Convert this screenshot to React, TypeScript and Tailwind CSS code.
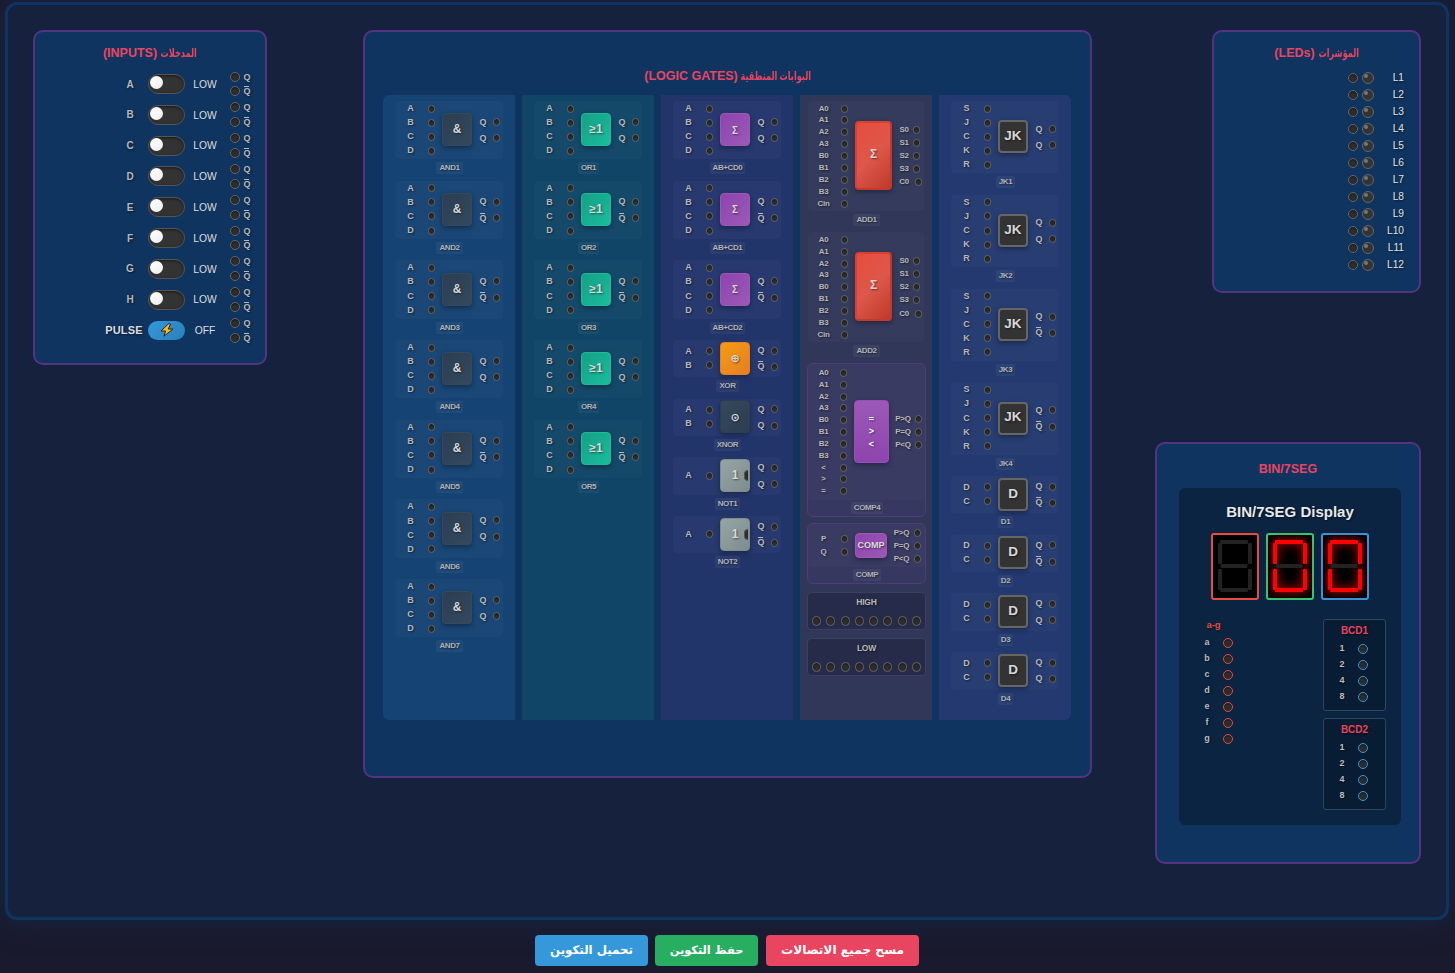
import React from "react";

const SH = "[text-shadow:1px_1px_2px_rgba(0,0,0,0.5)]";

function QBar() {
  return (
    <span className="relative inline-block">
      Q
      <span className="absolute top-[1px] left-[1px] h-px w-[5px] bg-[#b7b7b7]" />
    </span>
  );
}

const out = (t: string) => (t === "/Q" ? <QBar /> : t);

function Title({ ar, arWidth = "", en, className = "" }: { ar?: string; arWidth?: string; en: string; className?: string }) {
  return (
    <h3 dir="rtl" className={`flex justify-center gap-[4px] text-[12.5px] leading-[16px] font-bold whitespace-nowrap text-[#e94560] ${className}`}>
      {ar && (
        <span className={`flex justify-center text-[12px] ${arWidth}`}>
          <span className="block shrink-0 scale-x-[0.68]">{ar}</span>
        </span>
      )}
      <span>{en}</span>
    </h3>
  );
}

function Hole({ className }: { className: string }) {
  return <span className={`block shrink-0 rounded-full border bg-[#2d2d2d] shadow-[inset_0_1px_2px_rgba(0,0,0,0.5)] ${className}`} />;
}

type GateProps = {
  name: string;
  ins: string[];
  outs: string[];
  symbol: React.ReactNode;
  icon: string;
  bubble?: boolean;
};

function Tag({ children }: { children: React.ReactNode }) {
  return (
    <div className="flex justify-center pl-px">
      <div className={`h-[12px] rounded-[2px] bg-white/5 px-[3px] text-[8px] leading-[11px] font-bold tracking-[-0.4px] text-[#aeb1b6] ${SH}`}>
        {children}
      </div>
    </div>
  );
}

function Gate({ name, ins, outs, symbol, icon, bubble }: GateProps) {
  return (
    <div className="mb-[6.3px]">
      <div className="mx-[12px] flex min-h-[37.4px] items-center rounded-[4px] bg-white/[0.025] pt-[1px] pb-[2px]">
        <div className="-mt-px">
          {ins.map((t) => (
            <div key={t} className="flex h-[14.1px] items-center gap-[2px]">
              <span className={`w-[31px] text-center text-[9px] leading-[12px] font-bold text-[#b7b7b7] ${SH}`}>{t}</span>
              <Hole className="mt-px h-[8px] w-[7px] border-[#666]" />
            </div>
          ))}
        </div>
        <div className={`relative ml-[7px] flex h-[33px] w-[30px] items-center justify-center rounded-[4px] pb-[1px] font-bold text-[#d8d8d8] shadow-[0_2px_5px_rgba(0,0,0,0.35)] ${SH} ${icon}`}>
          {symbol}
          {bubble && <span className="absolute top-[10px] right-[1px] h-[11px] w-[4px] rounded-l-full border border-r-0 border-[#555] bg-[#2d2d2d]" />}
        </div>
        <div>
          {outs.map((t, i) => (
            <div key={i} className="flex h-[16.3px] items-center">
              <span className={`w-[22px] text-center text-[9px] leading-[12px] font-bold text-[#b7b7b7] ${SH}`}>{out(t)}</span>
              <Hole className="mt-px -ml-px h-[8px] w-[7px] border-[#666]" />
            </div>
          ))}
        </div>
      </div>
      <div className="pt-[3px]">
        <Tag>{name}</Tag>
      </div>
    </div>
  );
}

const SMALL = `text-center text-[8px] leading-[11px] font-bold tracking-[-0.3px] text-[#b7b7b7] ${SH}`;

function Pins({ items, label, row }: { items: string[]; label: string; row: string }) {
  return (
    <div>
      {items.map((t) => (
        <div key={t} className={`flex items-center ${row}`}>
          <span className={`${SMALL} ${label}`}>{t}</span>
          <Hole className="mt-px h-[8px] w-[7px] border-[#666]" />
        </div>
      ))}
    </div>
  );
}

const ABITS = ["A0", "A1", "A2", "A3", "B0", "B1", "B2", "B3"];

function Adder({ name }: { name: string }) {
  return (
    <div className="mb-[6.3px]">
      <div className="mx-[8px] flex h-[110px] items-center rounded-[4px] bg-white/[0.025]">
        <div className="-mt-px">
          <Pins items={[...ABITS, "Cin"]} label="mr-[2px] w-[31px]" row="h-[11.88px]" />
        </div>
        <div className={`ml-[7px] -mt-px flex h-[69px] w-[37px] items-center justify-center rounded-[4px] border-2 border-t-[#d8402f] border-r-[#c0392b] border-b-[#c53a2c] border-l-[#d8402f] bg-linear-135 from-[#e74c3c] via-[#dd574a] to-[#c0392b] pb-[3px] text-[12px] font-bold text-[#e6d0ce] shadow-[0_2px_5px_rgba(0,0,0,0.35)] ${SH}`}>
          Σ
        </div>
        <div className="-mt-px">
          <Pins items={["S0", "S1", "S2", "S3"]} label="w-[21px] pl-[3px]" row="h-[13.2px]" />
          <Pins items={["C0"]} label="w-[23px] pl-px" row="h-[13.2px]" />
        </div>
      </div>
      <div className="pt-[3px]">
        <Tag>{name}</Tag>
      </div>
    </div>
  );
}

function Rail({ name, className }: { name: string; className: string }) {
  return (
    <div className={`mr-[6px] ml-[7px] h-[38px] rounded-[4px] border border-[#3b4062] bg-[#272b4a] ${className}`}>
      <div className={`mt-[3px] text-center text-[8.5px] leading-[12px] font-bold tracking-[-0.2px] text-[#b7b7b7] ${SH}`}>{name}</div>
      <div className="mt-[8px] flex justify-between px-[4px]">
        {Array.from({ length: 8 }, (_, i) => (
          <Hole key={i} className="h-[10px] w-[9px] border-[#666]" />
        ))}
      </div>
    </div>
  );
}

function Digit({ border, on }: { border: string; on: boolean }) {
  const lit = on ? "fill-[#ff0000] drop-shadow-[0_0_5px_#ff0000]" : "fill-[#222]";
  return (
    <div className={`h-[67px] w-[48px] rounded-[3px] border-2 bg-black ${border}`}>
      <svg viewBox="0 0 44 63" className="block h-[63px] w-[44px] overflow-visible">
        <g className={lit}>
          <rect x="7" y="5" width="28" height="4" rx="1" />
          <rect x="5" y="8" width="4" height="21" rx="1" />
          <rect x="35" y="8" width="4" height="21" rx="1" />
          <rect x="5" y="34" width="4" height="21" rx="1" />
          <rect x="35" y="34" width="4" height="21" rx="1" />
          <rect x="7" y="53" width="28" height="4" rx="1" />
        </g>
        <rect x="7.5" y="29" width="27" height="4" rx="1" className="fill-[#222]" />
      </svg>
    </div>
  );
}

function Bcd({ name }: { name: string }) {
  return (
    <div className="h-[91.5px] w-[63px] rounded-[3px] border border-[#2f4660] bg-[#081c33]">
      <div className={`mt-[5px] mb-[3px] text-center text-[10px] leading-[12px] font-bold text-[#e94560] ${SH}`}>{name}</div>
      {["1", "2", "4", "8"].map((t) => (
        <div key={t} className="flex h-[16px] items-center">
          <span className={`ml-[11px] w-[14px] text-center text-[9px] leading-[12px] font-bold text-[#bbb] ${SH}`}>{t}</span>
          <Hole className="mt-[2px] ml-[9px] h-[10px] w-[10px] border-[#3498db]" />
        </div>
      ))}
    </div>
  );
}

const PANEL = "shrink-0 rounded-[10px] border-2 border-[#533483] bg-[#0f3460]";
const FOURS = ["A", "B", "C", "D"];

export default function App() {
  return (
    <div className="h-[973px] w-[1455px] overflow-hidden bg-[#1a1a2e] pt-[2px] pl-[5px] font-['Liberation_Sans','DejaVu_Sans',sans-serif]">
      <div className="flex h-[918px] w-[1444px] rounded-[12px] border-[3px] border-[#0f3460] bg-[#16213e] p-[25px] shadow-[0_0_30px_rgba(15,52,96,0.5)]">
        <section className={`${PANEL} h-[335px] w-[234px]`}>
          <Title ar="المدخلات" arWidth="w-[36px]" en="(INPUTS)" className="mt-[13px] mb-[7.7px]" />
          {["A", "B", "C", "D", "E", "F", "G", "H", "PULSE"].map((t) => {
            const pulse = t === "PULSE";
            return (
              <div key={t} className="flex h-[30.8px] items-center">
                <span className={`w-[50px] text-center font-bold ${pulse ? "ml-[64px] text-[11px] tracking-[0.2px] text-[#ddd]" : "mr-[-6px] ml-[70px] text-[10px] text-[#b7b7b7]"} ${SH}`}>{t}</span>
                {pulse ? (
                  <span className="-ml-px flex h-[19px] w-[37px] items-center justify-center rounded-full bg-linear-135 from-[#3498db] to-[#2980b9]">
                    <svg viewBox="0 0 14 14" className="h-[14px] w-[14px]">
                      <path d="M8.6 .8 1 8h4.6L4 13.2 13 6H8.2L10.6 1Z" fill="#fdb92c" stroke="#2b2418" strokeWidth="1" strokeLinejoin="round" />
                    </svg>
                  </span>
                ) : (
                  <span className="-ml-px h-[20px] w-[37px] rounded-full border border-[#555] bg-[#333] p-px shadow-[inset_0_1px_3px_rgba(0,0,0,0.5)]">
                    <span className="block h-[13px] w-[13px] rounded-full bg-linear-145 from-white to-[#eee]" />
                  </span>
                )}
                <span className="w-[40px] pt-px text-center text-[10.3px] text-[#ddd]">{pulse ? "OFF" : "LOW"}</span>
                <span className="ml-[5px]">
                  {["Q", "/Q"].map((q) => (
                    <span key={q} className="flex h-[14.8px] items-center gap-[3px]">
                      <Hole className="h-[10px] w-[10px] border-[#666]" />
                      <span className={`w-[8px] text-center text-[9px] leading-[12px] font-bold text-[#b7b7b7] ${SH}`}>{out(q)}</span>
                    </span>
                  ))}
                </span>
              </div>
            );
          })}
        </section>

        <section className={`${PANEL} ml-[96px] h-[748px] w-[729px] px-[18px]`}>
          <Title ar="البوابات المنطقية" arWidth="w-[69px]" en="(LOGIC GATES)" className="mt-[36px]" />
          <div className="mt-[11px] grid h-[625px] w-[688px] grid-cols-5 gap-[7px] overflow-hidden rounded-[6px]">
            <div className="bg-[#154373] pt-[6px]">
              {[1, 2, 3, 4, 5, 6, 7].map((n) => (
                <Gate key={n} name={`AND${n}`} ins={FOURS} outs={["Q", [2, 3, 5].includes(n) ? "/Q" : "Q"]} symbol="&" icon="border border-[#34495e] bg-linear-135 from-[#2c3e50] to-[#34495e] text-[12px]" />
              ))}
            </div>
            <div className="bg-[#104567] pt-[6px]">
              {[1, 2, 3, 4, 5].map((n) => (
                <Gate key={n} name={`OR${n}`} ins={FOURS} outs={["Q", [2, 3, 5].includes(n) ? "/Q" : "Q"]} symbol="≥1" icon="border border-[#1abc9c] bg-linear-135 from-[#16a085] to-[#1abc9c] text-[12px]" />
              ))}
            </div>
            <div className="bg-[#22356b] pt-[6px]">
              {[0, 1, 2].map((n) => (
                <Gate key={n} name={`AB+CD${n}`} ins={FOURS} outs={["Q", n ? "/Q" : "Q"]} symbol={<span className="pt-[2px]">Σ</span>} icon="border border-[#9b59b6] bg-linear-135 from-[#8e44ad] to-[#9b59b6] text-[10px]" />
              ))}
              <Gate name="XOR" ins={["A", "B"]} outs={["Q", "/Q"]} symbol={<span className="pt-[2px]">⊕</span>} icon="border border-[#e67e22] bg-linear-135 from-[#f39c12] to-[#e67e22] text-[11px]" />
              <Gate name="XNOR" ins={["A", "B"]} outs={["Q", "Q"]} symbol={<span className="pt-[2px]">⊙</span>} icon="border border-[#2c3e50] bg-linear-135 from-[#34495e] to-[#2c3e50] text-[11px]" />
              <Gate name="NOT1" ins={["A"]} outs={["Q", "Q"]} symbol="1" bubble icon="border border-[#7f8c8d] bg-linear-135 from-[#95a5a6] to-[#7f8c8d] text-[12px]" />
              <Gate name="NOT2" ins={["A"]} outs={["Q", "/Q"]} symbol="1" bubble icon="border border-[#7f8c8d] bg-linear-135 from-[#95a5a6] to-[#7f8c8d] text-[12px]" />
            </div>
            <div className="bg-[#313759] pt-[6px]">
              <Adder name="ADD1" />
              <Adder name="ADD2" />
              <div className="-mt-px mr-[6px] ml-[7px] h-[154px] rounded-[6px] border border-[#533a79] bg-[#373861]">
                <div className="flex h-[136px] items-center rounded-[4px] bg-white/[0.015]">
                  <div>
                    <Pins items={[...ABITS, "<", ">", "="]} label="mr-[1px] w-[31px]" row="h-[11.85px]" />
                  </div>
                  <div className={`ml-[7px] flex h-[63px] w-[35px] flex-col items-center justify-center rounded-[4px] border border-[#9b4bbd] bg-linear-to-b from-[#9b59b6] to-[#8e44ad] text-[9px] leading-[12.7px] font-bold text-white shadow-[0_2px_5px_rgba(0,0,0,0.35)] ${SH}`}>
                    <span>=</span>
                    <span>&gt;</span>
                    <span>&lt;</span>
                  </div>
                  <div>
                    <Pins items={["P>Q", "P=Q", "P<Q"]} label="w-[26px] pl-[2px]" row="h-[13.1px]" />
                  </div>
                </div>
                <div className="pt-[2px]">
                  <Tag>COMP4</Tag>
                </div>
              </div>
              <div className="mt-[6px] mr-[6px] ml-[7px] h-[61px] rounded-[6px] border border-[#533a79] bg-[#373861]">
                <div className="flex h-[43px] items-center rounded-[4px] bg-white/[0.015]">
                  <div>
                    <Pins items={["P", "Q"]} label="mr-[2px] w-[31px]" row="h-[13.1px]" />
                  </div>
                  <div className={`mt-px ml-[7px] flex h-[25px] w-[32px] items-center justify-center rounded-[4px] border border-[#9b59b6] bg-linear-135 from-[#8e44ad] to-[#9b59b6] text-[9px] font-bold text-[#ddd] shadow-[0_2px_5px_rgba(0,0,0,0.35)] ${SH}`}>
                    COMP
                  </div>
                  <div>
                    <Pins items={["P>Q", "P=Q", "P<Q"]} label="w-[27px] pl-[2px]" row="h-[13.1px]" />
                  </div>
                </div>
                <div className="pt-[2px]">
                  <Tag>COMP</Tag>
                </div>
              </div>
              <Rail name="HIGH" className="mt-[8px]" />
              <Rail name="LOW" className="mt-[8.4px]" />
            </div>
            <div className="bg-[#23396f] pt-[6px]">
              {[1, 2, 3, 4].map((n) => (
                <Gate key={n} name={`JK${n}`} ins={["S", "J", "C", "K", "R"]} outs={["Q", n > 2 ? "/Q" : "Q"]} symbol="JK" icon="border-2 border-[#666] bg-[#333] text-[13.5px]" />
              ))}
              {[1, 2, 3, 4].map((n) => (
                <Gate key={n} name={`D${n}`} ins={["D", "C"]} outs={["Q", n < 3 ? "/Q" : "Q"]} symbol="D" icon="border-2 border-[#666] bg-[#333] text-[13.5px]" />
              ))}
            </div>
          </div>
        </section>

        <div className="ml-[63px] flex h-[834px] w-[266px] shrink-0 flex-col items-end justify-between">
          <section className={`${PANEL} h-[263px] w-[209px]`}>
            <Title ar="المؤشرات" arWidth="w-[40px]" en="(LEDs)" className="mt-[13px] mb-[8px]" />
            {Array.from({ length: 12 }, (_, i) => (
              <div key={i} className="flex h-[17px] items-center">
                <Hole className="ml-[134px] h-[10px] w-[10px] border-[#666]" />
                <span className="ml-[4px] h-[12px] w-[12px] rounded-full border border-[#666] bg-[#333] p-px">
                  <span className="block h-[4px] w-[4px] rounded-full bg-[#777]" />
                </span>
                <span className={`ml-auto pr-[15px] text-[10.2px] text-[#e0e0e0] ${SH}`}>L{i + 1}</span>
              </div>
            ))}
          </section>

          <section className={`${PANEL} h-[422px] w-[266px]`}>
            <Title en="BIN/7SEG" className="mt-[17px] mb-[11px]" />
            <div className="mr-[18px] ml-[22px] h-[337px] rounded-[6px] bg-[#0a2442] pt-[14px]">
              <div className={`text-center text-[15px] leading-[20px] font-bold text-[#e8e8e8] ${SH}`}>BIN/7SEG Display</div>
              <div className="mt-[11px] flex justify-center gap-[7px]">
                <Digit border="border-[#e74c3c]" on={false} />
                <Digit border="border-[#2ecc71]" on />
                <Digit border="border-[#3498db]" on />
              </div>
              <div className="mt-[19px] flex justify-between pr-[15px] pl-[21px]">
                <div>
                  <div className={`-mt-px w-[27px] text-center text-[9.5px] leading-[13px] font-bold text-[#e74c3c] ${SH}`}>a-g</div>
                  <div className="mt-[3px]">
                    {["a", "b", "c", "d", "e", "f", "g"].map((t) => (
                      <div key={t} className="flex h-[16px] items-center">
                        <span className={`w-[14px] text-center text-[9px] leading-[12px] font-bold text-[#bbb] ${SH}`}>{t}</span>
                        <Hole className="mt-px ml-[9px] h-[10px] w-[10px] border-[#e74c3c]" />
                      </div>
                    ))}
                  </div>
                </div>
                <div className="flex flex-col gap-[7.5px]">
                  <Bcd name="BCD1" />
                  <Bcd name="BCD2" />
                </div>
              </div>
            </div>
          </section>
        </div>
      </div>

      <div className="mt-[15px] ml-[530px] flex h-[31px] font-['DejaVu_Sans',sans-serif] text-[12px] font-bold text-white">
        <button dir="rtl" className="w-[113px] rounded-[4px] bg-[#3498db] text-[11.8px] whitespace-nowrap">تحميل التكوين</button>
        <button dir="rtl" className="ml-[7px] w-[103px] rounded-[4px] bg-[#27ae60] text-[11.4px] whitespace-nowrap">حفظ التكوين</button>
        <button dir="rtl" className="ml-[8px] w-[153px] rounded-[4px] bg-[#e94560] text-[12.2px] whitespace-nowrap">مسح جميع الاتصالات</button>
      </div>
    </div>
  );
}
